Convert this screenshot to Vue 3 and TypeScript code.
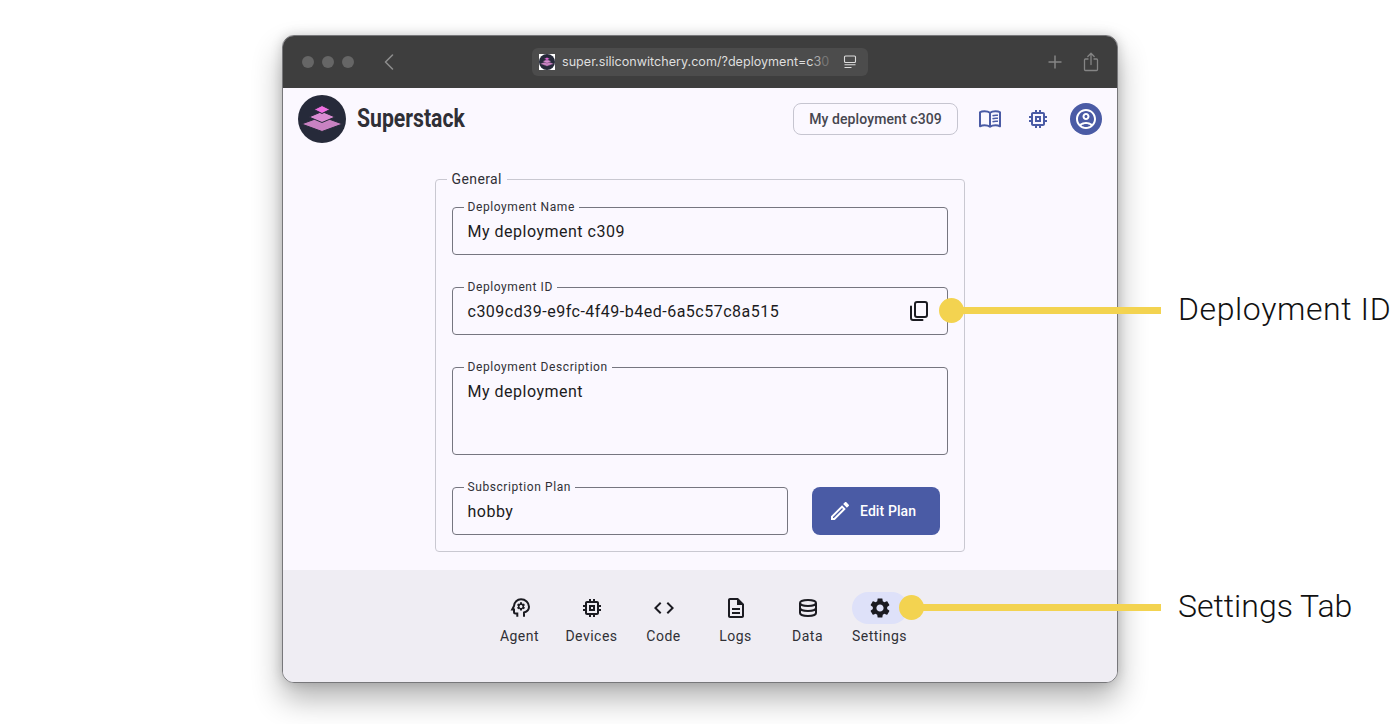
<script setup lang="ts">
interface Field { label: string; value: string; tall?: boolean; copy?: boolean }
interface NavItem { label: string; paths: string[]; stroke?: boolean; active?: boolean; gear?: boolean }

const logoShapes = [
  { points: '3.5,29 24,21.5 44.5,29 24,36.5', fill: '#c982c2' },
  { points: '11,22 24,16.5 37,22 24,27.5', fill: '#d98cd2' },
  { points: '16,14.5 24,10.5 32,14.5 24,18.5', fill: '#ee6fe2' },
]

const fields: Field[] = [
  { label: 'Deployment Name', value: 'My deployment c309' },
  { label: 'Deployment ID', value: 'c309cd39-e9fc-4f49-b4ed-6a5c57c8a515', copy: true },
  { label: 'Deployment Description', value: 'My deployment', tall: true },
]

const chip = 'M15 9H9v6h6V9zm-2 4h-2v-2h2v2zm8-2V9h-2V7c0-1.1-.9-2-2-2h-2V3h-2v2h-2V3H9v2H7c-1.1 0-2 .9-2 2v2H3v2h2v2H3v2h2v2c0 1.1.9 2 2 2h2v2h2v-2h2v2h2v-2h2c1.1 0 2-.9 2-2v-2h2v-2h-2v-2h2zm-4 6H7V7h10v10z'
const gearPath = 'M19.14 12.94c.04-.3.06-.61.06-.94 0-.32-.02-.64-.07-.94l2.03-1.58c.18-.14.23-.41.12-.61l-1.92-3.32c-.12-.22-.37-.29-.59-.22l-2.39.96c-.5-.38-1.03-.7-1.62-.94l-.36-2.54c-.04-.24-.24-.41-.48-.41h-3.84c-.24 0-.43.17-.47.41l-.36 2.54c-.59.24-1.13.57-1.62.94l-2.39-.96c-.22-.08-.47 0-.59.22L2.74 8.87c-.12.21-.08.47.12.61l2.03 1.58c-.05.3-.09.63-.09.94s.02.64.07.94l-2.03 1.58c-.18.14-.23.41-.12.61l1.92 3.32c.12.22.37.29.59.22l2.39-.96c.5.38 1.03.7 1.62.94l.36 2.54c.05.24.24.41.48.41h3.84c.24 0 .44-.17.47-.41l.36-2.54c.59-.24 1.13-.56 1.62-.94l2.39.96c.22.08.47 0 .59-.22l1.92-3.32c.12-.22.07-.47-.12-.61l-2.01-1.58zM12 15.6c-1.98 0-3.6-1.62-3.6-3.6s1.62-3.6 3.6-3.6 3.6 1.62 3.6 3.6-1.62 3.6-3.6 3.6z'

const navItems: NavItem[] = [
  {
    label: 'Agent',
    stroke: true,
    gear: true,
    paths: ['M9.300 20.700V17.500H7.500A1.500 1.500 0 0 1 6 16V13.500H4.200L6 10C6.200 6.200 9.200 3.300 13 3.300C17.400 3.300 21 6.600 21 10.700C21 13.300 19.500 15.500 16 16.500V20.700'],
  },
  { label: 'Devices', paths: [chip] },
  { label: 'Code', paths: ['M9.4 16.6L4.8 12l4.6-4.6L8 6l-6 6 6 6 1.4-1.4zm5.2 0l4.6-4.6-4.6-4.6L16 6l6 6-6 6-1.4-1.4z'] },
  { label: 'Logs', paths: ['M8 16h8v2H8zm0-4h8v2H8zm6-10H6c-1.1 0-2 .9-2 2v16c0 1.1.89 2 1.99 2H18c1.1 0 2-.9 2-2V8l-6-6zm4 18H6V4h7v5h5v11z'] },
  {
    label: 'Data',
    stroke: true,
    paths: [
      'M4 7c0-1.700 3.600-3 8-3s8 1.300 8 3-3.600 3-8 3-8-1.300-8-3z',
      'M4 7v10c0 1.700 3.600 3 8 3s8-1.300 8-3V7',
      'M4 12c0 1.700 3.600 3 8 3s8-1.300 8-3',
    ],
  },
  { label: 'Settings', active: true, paths: [gearPath] },
]
</script>

<template>
  <div class="page">
    <div class="window">
      <div class="titlebar">
        <div class="dots"><i></i><i></i><i></i></div>
        <svg class="back" viewBox="0 0 12 18" width="12" height="18" fill="none" stroke="#8c8c8c" stroke-width="1.6" stroke-linecap="round" stroke-linejoin="round"><path d="M9.500 2 2.500 9l7 7" /></svg>
        <div class="urlbar">
          <span class="favicon">
            <svg viewBox="0 0 48 48" width="16" height="16">
              <circle cx="24" cy="24" r="24" fill="#262a3a" />
              <polygon v-for="s in logoShapes" :key="s.points" :points="s.points" :fill="s.fill" stroke="#262a3a" stroke-width="1" />
            </svg>
          </span>
          <span class="url">super.siliconwitchery.com/?deployment=c<span class="f1">3</span><span class="f2">0</span></span>
          <svg class="reader" viewBox="0 0 14 14" width="14" height="14" fill="none" stroke="#dcdcdc" stroke-width="1.100"><rect x="1.500" y="1" width="11" height="6.500" rx="1" /><path d="M1.500 9.800h11M1.500 12.500h7" /></svg>
        </div>
        <svg class="plus" viewBox="0 0 16 16" width="16" height="16" fill="none" stroke="#858585" stroke-width="1.500"><path d="M8 1.500v13M1.500 8h13" /></svg>
        <svg class="share" viewBox="0 0 16 20" width="16" height="20" fill="none" stroke="#858585" stroke-width="1.300" stroke-linecap="round" stroke-linejoin="round"><path d="M5 7H2.500a1 1 0 0 0-1 1v9.500a1 1 0 0 0 1 1h11a1 1 0 0 0 1-1V8a1 1 0 0 0-1-1H11M8 12.500V1.500M4.800 4.500 8 1.300l3.200 3.200" /></svg>
      </div>

      <header class="appbar">
        <svg class="logo" viewBox="0 0 48 48" width="48" height="48">
          <circle cx="24" cy="24" r="24" fill="#262a3a" />
          <polygon v-for="s in logoShapes" :key="s.points" :points="s.points" :fill="s.fill" stroke="#262a3a" stroke-width="1" />
        </svg>
        <h1 class="brand">Superstack</h1>
        <button class="deployment">My deployment c309</button>
        <svg class="tool" viewBox="0 0.75 24 24" width="24" height="24" fill="none" stroke="#4a5ba5" stroke-width="2" stroke-linejoin="round"><path d="M12 6.500C10.500 5.300 8.500 5 6.500 5S3 5.300 2 6v14c1.500-.7 3-1 4.500-1 2 0 4 .4 5.500 1.500 1.500-1.100 3.500-1.500 5.500-1.500 1.500 0 3 .3 4.500 1V6c-1-.7-2.500-1-4.500-1s-4 .3-5.500 1.500zM12 6.500v14" /><path d="M14.500 9.500c1.700-.6 3.700-.7 5.500-.4M14.500 12.500c1.700-.6 3.700-.7 5.500-.4M14.500 15.500c1.700-.6 3.700-.7 5.500-.4" stroke-width="1.500" /></svg>
        <svg class="tool" viewBox="0 0 24 24" width="24" height="24" fill="#4a5ba5"><path :d="chip" /></svg>
        <span class="avatar">
          <svg viewBox="0 0 24 24" width="24" height="24" fill="#fff">
            <path d="M12 2C6.480 2 2 6.480 2 12s4.480 10 10 10 10-4.480 10-10S17.520 2 12 2zM7.350 18.500C8.660 17.560 10.260 17 12 17s3.340.56 4.650 1.500c-1.310.94-2.910 1.500-4.650 1.500s-3.340-.56-4.650-1.500zm10.790-1.380C16.450 15.800 14.320 15 12 15s-4.450.8-6.140 2.120C4.700 15.730 4 13.950 4 12c0-4.420 3.580-8 8-8s8 3.580 8 8c0 1.950-.7 3.730-1.860 5.120z" />
            <path d="M12 6c-1.930 0-3.500 1.570-3.500 3.500S10.070 13 12 13s3.500-1.570 3.500-3.500S13.930 6 12 6zm0 5c-.83 0-1.500-.67-1.500-1.500S11.170 8 12 8s1.500.67 1.500 1.500S12.830 11 12 11z" />
          </svg>
        </span>
      </header>

      <main class="content">
        <fieldset class="group">
          <legend>General</legend>
          <div class="group-body">
            <fieldset v-for="f in fields" :key="f.label" class="field" :class="{ tall: f.tall }">
              <legend>{{ f.label }}</legend>
              <div class="value">
                <span>{{ f.value }}</span>
                <svg v-if="f.copy" class="copy" viewBox="0 0 24 24" width="24" height="24" fill="none" stroke="#1b1b21" stroke-width="2" stroke-linecap="round"><rect x="8" y="3" width="12" height="15" rx="2" /><path d="M4 7.500V19a2 2 0 0 0 2 2h9.500" /></svg>
              </div>
            </fieldset>
            <div class="plan-row">
              <fieldset class="field plan">
                <legend>Subscription Plan</legend>
                <div class="value"><span>hobby</span></div>
              </fieldset>
              <button class="edit">
                <svg viewBox="0 0 24 24" width="24" height="24" fill="#fff"><path d="M14.060 9.020l.92.92L5.920 19H5v-.92l9.060-9.060M17.660 3c-.25 0-.51.1-.7.29l-1.830 1.830 3.750 3.750 1.830-1.830c.39-.39.39-1.020 0-1.410l-2.340-2.340c-.2-.2-.45-.29-.71-.29zm-3.600 3.190L3 17.250V21h3.750L17.810 9.940l-3.750-3.750z" /></svg>
                <span>Edit Plan</span>
              </button>
            </div>
          </div>
        </fieldset>
      </main>

      <nav class="tabs">
        <div v-for="item in navItems" :key="item.label" class="tab">
          <span class="indicator" :class="{ active: item.active }">
            <svg viewBox="0 0 24 24" width="24" height="24" :fill="item.stroke ? 'none' : '#1b1b21'" :stroke="item.stroke ? '#1b1b21' : 'none'" stroke-width="2">
              <path v-for="p in item.paths" :key="p" :d="p" />
              <path v-if="item.gear" :d="gearPath" fill="#1b1b21" stroke="none" transform="translate(13 10.400) scale(.42) translate(-12 -12)" />
            </svg>
          </span>
          <span class="tab-label">{{ item.label }}</span>
        </div>
      </nav>
    </div>

    <div class="callout id-callout"><i class="dot"></i><i class="line"></i></div>
    <div class="callout tab-callout"><i class="dot"></i><i class="line"></i></div>
    <span class="callout-text id-text">Deployment ID</span>
    <span class="callout-text tab-text">Settings Tab</span>
  </div>
</template>

<style scoped>
.page {
  position: relative;
  width: 1400px;
  height: 724px;
  padding: 34.5px 0 0 281.5px;
  box-sizing: border-box;
  background: #fff;
  overflow: hidden;
  font-family: Roboto, "Liberation Sans", sans-serif;
  color: #1b1b21;
}
.window {
  width: 836px;
  height: 648px;
  box-sizing: border-box;
  border: 1px solid #77777a;
  border-radius: 12px;
  overflow: hidden;
  display: flex;
  flex-direction: column;
  background: #fbf8ff;
  box-shadow: 0 16px 30px rgba(0, 0, 0, 0.3), 0 0 12px rgba(0, 0, 0, 0.16);
}
.titlebar {
  height: 52.5px;
  flex: none;
  background: #3e3e3e;
  display: flex;
  align-items: center;
  padding-left: 19.5px;
  box-sizing: border-box;
}
.dots {
  display: flex;
  gap: 8px;
}
.dots i {
  width: 12px;
  height: 12px;
  border-radius: 50%;
  background: #666;
}
.back {
  margin-left: 29px;
}
.urlbar {
  margin-left: 137px;
  width: 336px;
  height: 28px;
  background: #4c4c4c;
  border-radius: 6px;
  display: flex;
  align-items: center;
  padding: 0 11px 0 7px;
  box-sizing: border-box;
}
.favicon {
  width: 16px;
  height: 16px;
  background: #fff;
  display: flex;
}
.url {
  margin-left: 7px;
  flex: 1;
  font-family: Inter, sans-serif;
  font-size: 12.6px;
  color: #dedede;
  white-space: nowrap;
  overflow: hidden;
}
.f1 { color: #a8a8a8; }
.f2 { color: #777; }
.plus {
  margin-left: 179px;
}
.share {
  margin-left: 20px;
}
.appbar {
  height: 62px;
  flex: none;
  display: flex;
  align-items: center;
  padding: 0 14.5px 0 15.5px;
  box-sizing: border-box;
}
.logo { flex: none; }
.brand {
  margin: 0 0 2px 11px;
  font-size: 26px;
  font-weight: 700;
  color: #2f2f36;
  letter-spacing: 0;
  transform: scaleX(0.815);
  transform-origin: left center;
  flex: 1;
  line-height: 30px;
}
.deployment {
  width: 165px;
  height: 32px;
  border: 1px solid #c6c5d0;
  border-radius: 8px;
  background: transparent;
  font-family: Roboto, sans-serif;
  font-size: 14px;
  font-weight: 500;
  letter-spacing: 0.1px;
  color: #46464f;
  padding: 0;
}
.tool {
  margin-left: 20px;
}
.tool + .tool {
  margin-left: 24px;
}
.avatar {
  margin-left: 20px;
  width: 32px;
  height: 32px;
  border-radius: 50%;
  background: #4a5ba5;
  display: flex;
  align-items: center;
  justify-content: center;
}
.content {
  flex: 1;
  padding-top: 29px;
  display: flex;
  justify-content: center;
}
.group {
  margin: 0;
  padding: 0;
  width: 530px;
  height: 373px;
  box-sizing: border-box;
  border: 1px solid #c9c8d1;
  border-radius: 4px;
  min-width: 0;
}
.group > legend {
  margin-left: 11px;
  padding: 0 5px;
  height: 1px;
  line-height: 1px;
  font-size: 14px;
  letter-spacing: 0.4px;
  color: #303036;
}
.group-body {
  padding: 27px 16px 0;
  display: flex;
  flex-direction: column;
  gap: 32px;
}
.field {
  margin: 0;
  padding: 0;
  height: 48px;
  box-sizing: border-box;
  border: 1px solid #767680;
  border-radius: 4px;
  min-width: 0;
}
.field.tall {
  height: 88px;
}
.field > legend {
  margin-left: 11px;
  padding: 0 4px;
  height: 1px;
  line-height: 1px;
  font-size: 12px;
  letter-spacing: 0.58px;
  color: #303036;
}
.value {
  height: 46px;
  padding: 0 16px 0 15px;
  display: flex;
  align-items: center;
  justify-content: space-between;
  font-size: 16px;
  letter-spacing: 0.5px;
  color: #1b1b21;
}
.copy {
  margin-right: -0.5px;
}
.plan-row {
  display: flex;
  gap: 24px;
}
.plan {
  width: 336.5px;
}
.edit {
  width: 127.5px;
  height: 48px;
  border: 0;
  border-radius: 8px;
  background: #4a5ba5;
  color: #fff;
  display: flex;
  align-items: center;
  gap: 8px;
  padding: 0 0 0 16px;
  font-family: Roboto, sans-serif;
  font-size: 14px;
  font-weight: 500;
  letter-spacing: 0.1px;
}
.tabs {
  flex: none;
  height: 111.5px;
  background: #efedf3;
  display: flex;
  justify-content: center;
}
.tab {
  width: 72px;
  padding-top: 21.5px;
  display: flex;
  flex-direction: column;
  align-items: center;
}
.indicator {
  width: 56px;
  height: 32px;
  border-radius: 16px;
  display: flex;
  align-items: center;
  justify-content: center;
}
.indicator.active {
  background: #dee1f9;
}
.tab-label {
  margin-top: 4.5px;
  font-size: 14px;
  line-height: 16px;
  letter-spacing: 0.5px;
  color: #303036;
  white-space: nowrap;
}
.callout {
  position: absolute;
  height: 25px;
  display: flex;
  align-items: center;
}
.id-callout {
  left: 939px;
  top: 298px;
}
.tab-callout {
  left: 899px;
  top: 595px;
}
.dot {
  width: 25px;
  height: 25px;
  border-radius: 50%;
  background: #f3d350;
  flex: none;
}
.line {
  height: 7px;
  background: #f3d350;
  margin-left: -2px;
}
.id-callout .line { width: 199px; }
.tab-callout .line { width: 239px; }
.callout-text {
  position: absolute;
  left: 1178px;
  font-family: Roboto, "Liberation Sans", sans-serif;
  font-weight: 300;
  font-size: 32px;
  line-height: 36px;
  color: #111;
  white-space: nowrap;
}
.id-text { top: 291px; letter-spacing: 0.6px; }
.tab-text { top: 588px; }
</style>
